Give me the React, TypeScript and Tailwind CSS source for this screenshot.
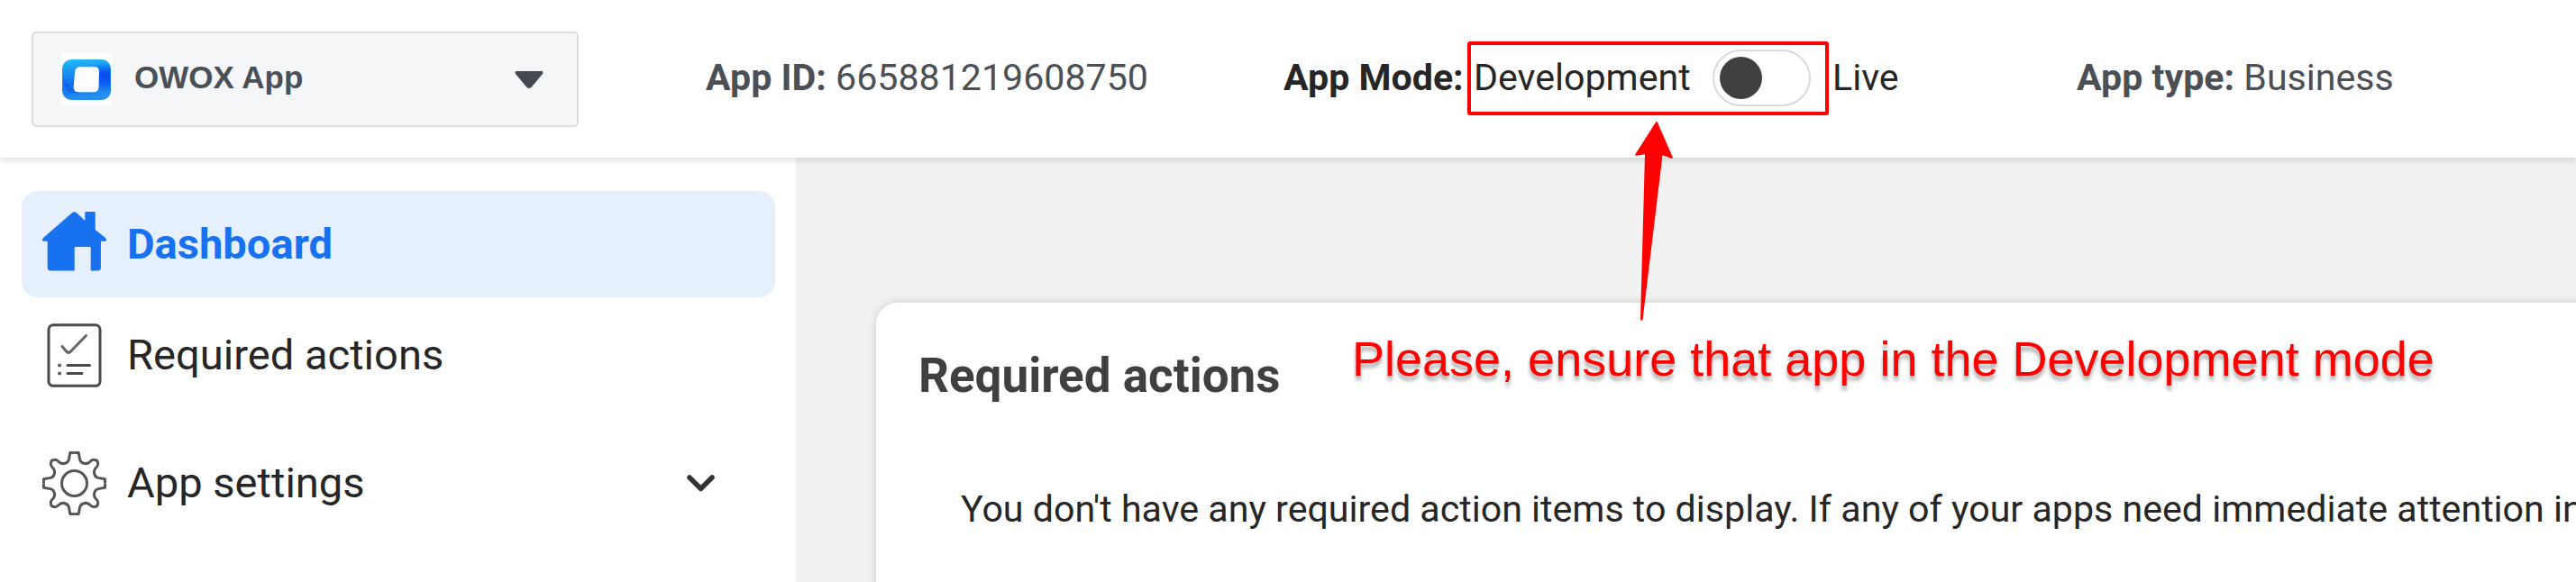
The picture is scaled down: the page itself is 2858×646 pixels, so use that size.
import { type ReactNode } from "react";

function Logo() {
  return (
    <svg className="block h-[58px] w-[58px] shrink-0 bg-white" viewBox="0 0 58 58">
      <defs>
        <linearGradient id="ring" x1="0" y1="0" x2="0.15" y2="1">
          <stop offset="0" stopColor="#20c4f8" />
          <stop offset="0.25" stopColor="#1b9cf4" />
          <stop offset="0.6" stopColor="#1272ee" />
          <stop offset="1" stopColor="#2490f0" />
        </linearGradient>
        <linearGradient id="side" x1="0" y1="0" x2="0" y2="1">
          <stop offset="0" stopColor="#0748f2" stopOpacity="0" />
          <stop offset="0.4" stopColor="#0748f2" />
          <stop offset="1" stopColor="#0748f2" stopOpacity="0" />
        </linearGradient>
      </defs>
      <rect x="2" y="7" width="54" height="45" rx="10" fill="url(#ring)" />
      <rect x="40" y="12" width="15" height="30" rx="4" fill="url(#side)" />
      <path d="M4 30L14 40L22 45L10 44Q4 40 4 30Z" fill="#0a50ee" fillOpacity="0.5" />
      <path d="M22 15.300H38Q43 15.300 43 20.500L42.500 38Q42 43.300 37 43.300H20Q14.700 43.300 14.700 38L16 21Q16.500 15.300 22 15.300Z" fill="#fff" />
    </svg>
  );
}

function HouseIcon() {
  return (
    <svg className="mb-[6px] block h-[66px] w-[71px] shrink-0 fill-[#1872f0]" viewBox="0 0 71 66">
      <path d="M33.500 .8Q35.500-.5 37.500 .8L47.300 10V1Q47.300 0 48.500 0H57.500Q58.700 0 58.700 1V20L70 29Q71 30 71 31.500Q71 32.800 69.500 32.800H64.900V62Q64.900 65.500 61.500 65.500H53.700V40Q53.700 39 52.500 39H37Q35.700 39 35.700 40V65.500H9.200Q5.700 65.500 5.700 62V32.800H1.500Q0 32.800 0 31.500Q0 30 1 29Z" />
    </svg>
  );
}

function ChecklistIcon() {
  return (
    <svg className="block h-[71px] w-[71px] shrink-0" viewBox="0 0 71 71" fill="none" stroke="#4a4a4a" strokeWidth="3" strokeLinecap="round" strokeLinejoin="round">
      <rect x="7" y="1.800" width="57" height="67.500" rx="5" />
      <path d="M22 25.500L27 31.500Q29 33.200 31 31.500L48.500 13.500" stroke="#666" />
      <path d="M28 46.500H52.500M28 55.500H44" />
      <path d="M19 46.500h.1M19 55.500h.1" strokeWidth="4.200" stroke="#666" />
    </svg>
  );
}

const gearQuarter =
  "M35.5 1.5H40.2L41.6 9Q42.3 12.3 46 13.3Q49.3 14.3 52 12.2Q55.5 8.500 58 9.500Q61.5 9.500 61.5 13Q62.5 15.5 58.8 19Q56.7 21.7 57.7 25Q58.7 28.7 62 29.4L69.5 30.8V35.5";

function GearIcon() {
  return (
    <svg className="block h-[71px] w-[71px] shrink-0" viewBox="0 0 71 71" fill="none" stroke="#555" strokeWidth="3" strokeLinejoin="round">
      <path d={gearQuarter} />
      <path d={gearQuarter} transform="rotate(90 35.5 35.5)" />
      <path d={gearQuarter} transform="rotate(180 35.5 35.5)" />
      <path d={gearQuarter} transform="rotate(270 35.5 35.5)" />
      <circle cx="35.500" cy="35.500" r="14" />
    </svg>
  );
}

function Toggle() {
  return (
    <div className="flex h-[63px] w-[109px] shrink-0 items-center rounded-full border-2 border-[#dadada] bg-white pl-1.5">
      <div className="h-[47px] w-[47px] rounded-full bg-[#404040]" />
    </div>
  );
}

function NavItem({ icon, children, className }: { icon: ReactNode; children: ReactNode; className: string }) {
  return (
    <div className={`flex w-[836px] items-center pl-[23px] text-[47.100px] leading-none text-[#262626] ${className}`}>
      {icon}
      {children}
    </div>
  );
}

export default function App() {
  return (
    <div className="relative h-[646px] w-[2858px] overflow-hidden bg-white font-['Roboto',sans-serif] whitespace-nowrap">
      <header className="relative z-10 flex h-[175px] items-start bg-white text-[41.150px] leading-[48px] text-[#4b4f56] shadow-[0_2px_8px_rgba(0,0,0,0.15)]">
        <div className="mt-[35px] ml-[35px] flex h-[106px] w-[607px] shrink-0 items-center rounded-[5px] border-2 border-[#dadde1] bg-[#f5f6f7] pl-[30px]">
          <Logo />
          <span className="mb-[4px] ml-[24px] font-['Liberation_Sans',sans-serif] text-[35px] font-bold">OWOX App</span>
          <svg className="ml-auto mr-[37px] h-[19px] w-[32px] fill-[#444950]" viewBox="0 0 32 19">
            <path d="M1.500 0H30.500Q32 1 31 3L18.500 18Q16 20 13.500 18L1 3Q0 1 1.500 0Z" />
          </svg>
        </div>
        <div className="mt-[62px] ml-[141px] w-[641px] shrink-0">
          <b>App ID:</b> 665881219608750
        </div>
        <b className="mt-[62px] w-[204px] shrink-0 text-[#262626]">App Mode:</b>
        <div className="mt-[46px] flex h-[82px] w-[401px] shrink-0 items-center rounded-[3px] border-4 border-[#f00] pb-[2px] text-[#262626]">
          <span className="ml-[3px] w-[265px]">Development</span>
          <Toggle />
        </div>
        <span className="mt-[62px] ml-[4px] w-[271px] shrink-0 text-[#262626]">Live</span>
        <div className="mt-[62px] shrink-0">
          <b>App type:</b> Business
        </div>
      </header>
      <div className="flex h-[471px]">
        <nav className="w-[883px] shrink-0 bg-white pt-[37px] pl-[24px]">
          <NavItem icon={<HouseIcon />} className="h-[118px] gap-[23px] rounded-[18px] bg-[#e6f0fd] font-bold">
            <span className="text-[#1872f0]">Dashboard</span>
          </NavItem>
          <NavItem icon={<ChecklistIcon />} className="h-[128px] gap-[23px]">
            <span>Required actions</span>
          </NavItem>
          <NavItem icon={<GearIcon />} className="h-[156px] gap-[23px]">
            <span>App settings</span>
            <svg className="ml-auto mr-[67px] h-[19px] w-[31px]" viewBox="0 0 31 19" fill="none" stroke="#333" strokeWidth="5.500" strokeLinecap="round" strokeLinejoin="round">
              <path d="M3 3L15.500 15.500L28 3" />
            </svg>
          </NavItem>
        </nav>
        <main className="grow bg-[#f1f1f1] pt-[161px] pl-[89px]">
          <section className="h-[400px] w-[1960px] rounded-tl-[24px] bg-white pl-[46px] shadow-[0_0_10px_rgba(0,0,0,0.16)]">
            <div className="flex h-[189px] items-start">
              <h2 className="mt-[49px] w-[482px] shrink-0 pl-px text-[53px] leading-[64px] font-bold text-[#404040]">Required actions</h2>
              <p className="mt-[30px] font-['Liberation_Sans',sans-serif] text-[54px] leading-[64px] text-[#f00] [text-shadow:0_5px_4px_rgba(0,0,0,0.35)]">
                Please, ensure that app in the Development mode
              </p>
            </div>
            <p className="mt-[16px] pl-[48px] text-[41.150px] leading-[48px] text-[#262626]">
              You don't have any required action items to display. If any of your apps need immediate attention in
            </p>
          </section>
        </main>
      </div>
      <svg className="absolute top-[134px] left-[1813px] z-20 h-[223px] w-[44px] fill-[#f00]" viewBox="1813 134 44 223">
        <path d="M1836.800 136Q1838 134 1839 136L1855.800 174.500Q1856 176.500 1853.500 175.500L1844.500 172.300L1822.500 355Q1821.500 356.500 1820 355L1825 171.300L1815.500 172.800Q1813.500 172.800 1814.500 171Z" />
      </svg>
    </div>
  );
}
